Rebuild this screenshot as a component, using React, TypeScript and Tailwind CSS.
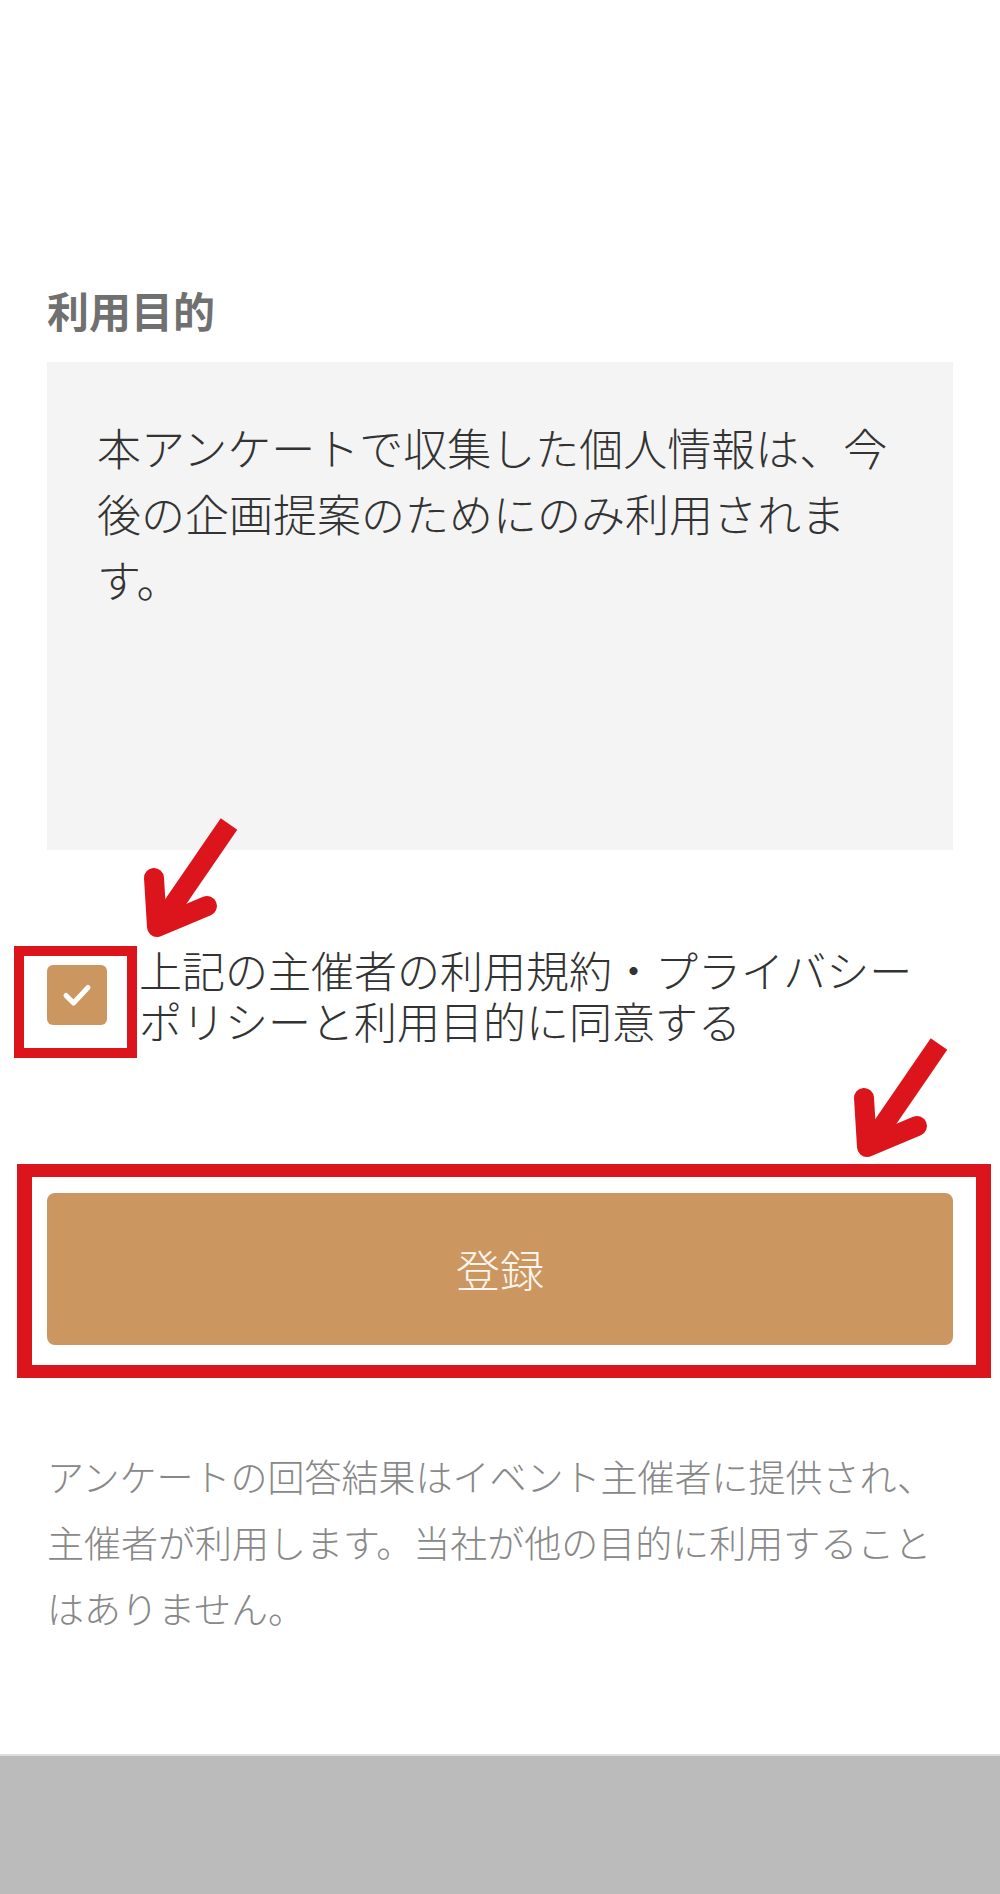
import React, { useState } from 'react';

export default function App() {
  const [agreed, setAgreed] = useState(true);

  return (
    <div className="relative w-[1000px] min-h-[1894px] bg-white font-['Noto_Sans_CJK_JP',sans-serif]">
      <div className="px-[47px] pt-[286px]">
        <h2 className="text-[42px] font-bold leading-[48px] text-[#707070]">利用目的</h2>

        <div className="mt-[28px] h-[488px] bg-[#f4f4f4] px-[50px] pt-[52px] text-[44px] font-light leading-[66px] text-[#333333]">
          本アンケートで収集した個人情報は、今後の企画提案のためにのみ利用されます。
        </div>

        <label className="mt-[94px] flex items-center gap-[32px] cursor-pointer">
          <button
            type="button"
            onClick={() => setAgreed(!agreed)}
            className="flex h-[60px] w-[60px] shrink-0 items-center justify-center rounded-[6px] bg-[#cc9660]"
          >
            {agreed && (
              <svg width="30" height="24" viewBox="0 0 30 24" fill="none">
                <path d="M4 12.5 11.5 20 26 4.5" stroke="white" strokeWidth="5" strokeLinecap="round" strokeLinejoin="round" />
              </svg>
            )}
          </button>
          <span className="text-[43px] font-light leading-[51px] text-[#333333]">
            上記の主催者の利用規約・プライバシーポリシーと利用目的に同意する
          </span>
        </label>

        <button
          type="submit"
          className="mt-[147px] flex h-[152px] w-full items-center justify-center rounded-[8px] bg-[#cc9660] text-[44px] font-light text-[#fdf6ee]"
        >
          登録
        </button>

        <p className="mt-[98px] text-[37px] font-light leading-[66px] text-[#888888]">
          アンケートの回答結果はイベント主催者に提供され、主催者が利用します。当社が他の目的に利用することはありません。
        </p>
      </div>

      <div className="mt-[113px] h-[140px] border-t-2 border-[#dedede] bg-[#bbbbbb]" />

      {/* annotations drawn over the screenshot */}
      <div className="pointer-events-none absolute left-[14px] top-[946px] h-[112px] w-[123px] border-[10px] border-[#dc151c]" />
      <div className="pointer-events-none absolute left-[17px] top-[1164px] h-[214px] w-[974px] border-x-[15px] border-y-[13px] border-[#dc151c]" />
      <svg className="pointer-events-none absolute left-0 top-0" width="1000" height="1894" viewBox="0 0 1000 1894">
        <g stroke="#dc151c" strokeWidth="20" fill="none">
          <path d="M229 824 159 926" strokeLinecap="butt" />
          <path d="M154 878 157 927 207 906" strokeLinecap="round" strokeLinejoin="round" />
          <path d="M939 1044 869 1146" strokeLinecap="butt" />
          <path d="M864 1098 867 1147 917 1126" strokeLinecap="round" strokeLinejoin="round" />
        </g>
      </svg>
    </div>
  );
}
